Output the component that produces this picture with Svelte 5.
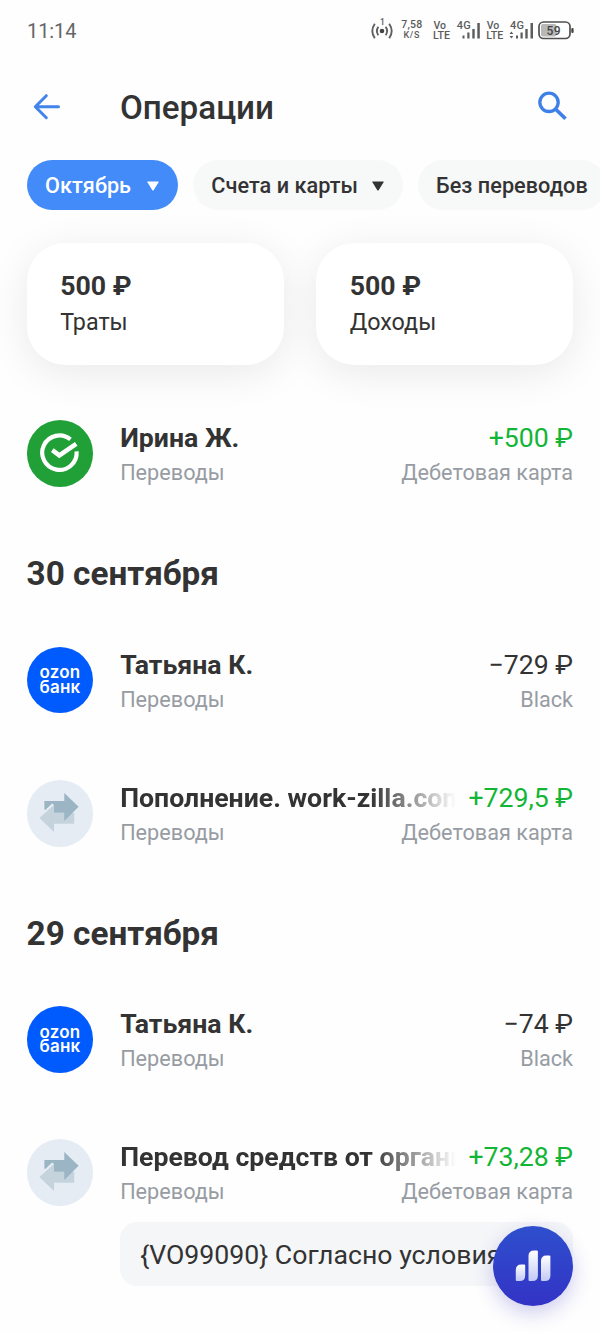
<script>
  const chips = [
    { label: 'Октябрь', arrow: true, active: true },
    { label: 'Счета и карты', arrow: true },
    { label: 'Без переводов' }
  ];
  const totals = [
    { sum: '500 ₽', label: 'Траты' },
    { sum: '500 ₽', label: 'Доходы' }
  ];
  const groups = [
    { rows: [{ icon: 'sber', name: 'Ирина Ж.', sum: '+500 ₽', income: true, account: 'Дебетовая карта' }] },
    {
      date: '30 сентября',
      rows: [
        { icon: 'ozon', name: 'Татьяна К.', sum: '−729 ₽', account: 'Black' },
        { icon: 'transfer', name: 'Пополнение. work-zilla.com', long: true, sum: '+729,5 ₽', income: true, account: 'Дебетовая карта' }
      ]
    },
    {
      date: '29 сентября',
      rows: [
        { icon: 'ozon', name: 'Татьяна К.', sum: '−74 ₽', account: 'Black' },
        { icon: 'transfer', name: 'Перевод средств от организации', long: true, sum: '+73,28 ₽', income: true, account: 'Дебетовая карта', note: '{VO99090} Согласно условиям' }
      ]
    }
  ];
</script>

<div class="screen">
  <div class="status">
    <span class="time">11:14</span>
    <svg class="indicators" width="206" height="28" viewBox="369 16 206 28">
      <g fill="none" stroke="#606060" stroke-width="1.9">
        <path d="M378.300 26.700q-2.800 4.300 0 8.600M385.700 26.700q2.800 4.300 0 8.600M374.800 23.700q-5 7.300 0 14.600M389.200 23.700q5 7.300 0 14.600" />
      </g>
      <circle cx="382" cy="31" r="2.300" fill="#444" />
      <g class="tiny">
        <text x="380" y="25" font-size="8.500">1</text>
        <text x="401.300" y="28" font-size="10.500" textLength="21">7,58</text>
        <text x="403.500" y="38.300" font-size="9" textLength="16">K/S</text>
        <text x="433.500" y="28.600" font-size="10.500" textLength="12.500">Vo</text>
        <text x="433" y="38.800" font-size="10.800" textLength="17" lengthAdjust="spacingAndGlyphs">LTE</text>
        <text x="456.800" y="29.300" font-size="11" textLength="14">4G</text>
        <text x="486.800" y="28.600" font-size="10.500" textLength="12.500">Vo</text>
        <text x="486.300" y="38.800" font-size="10.800" textLength="17" lengthAdjust="spacingAndGlyphs">LTE</text>
        <text x="510" y="29.300" font-size="11" textLength="14">4G</text>
      </g>
      <path fill="#5c5c5c" d="M462.500 35.500h2v3h-2zM467.300 32.500h2.200v6h-2.200zM472.300 29h2.400v9.500h-2.400zM477.300 23h2.500v15.500h-2.500zM516 35.500h2v3h-2zM520.500 32.500h2.200v6h-2.200zM525.300 29h2.400v9.500h-2.400zM530.500 23h2.500v15.500h-2.500zM509.500 34l1.900-2.500 1.900 2.500zM509.500 36l1.900 2.500 1.900-2.500z" />
      <rect x="541" y="24" width="15.500" height="12.500" rx="2" fill="#b8b8b8" />
      <rect x="539" y="22" width="31" height="16.500" rx="4.500" fill="none" stroke="#505050" stroke-width="1.700" />
      <rect x="571.300" y="28" width="2.300" height="5" rx="1" fill="#444" />
      <text class="charge" x="546.500" y="34.500" font-size="12" textLength="14">59</text>
    </svg>
  </div>

  <header>
    <svg class="back" width="28" height="28" viewBox="0 0 28 28" fill="none" stroke="#4284ec" stroke-width="3" stroke-linecap="round" stroke-linejoin="round">
      <path d="M25.500 13.700H2.500M13.300 2.700L2.300 13.700l11 11" />
    </svg>
    <h1>Операции</h1>
    <svg class="search" width="32" height="32" viewBox="0 0 32 32" fill="none" stroke="#3f7fe8">
      <circle cx="12" cy="11.300" r="9.200" stroke-width="3.300" />
      <path d="M19 18.500l9.500 9.300" stroke-width="3.700" />
    </svg>
  </header>

  <div class="chips">
    {#each chips as chip}
      <button class="chip" class:active={chip.active}>
        <span>{chip.label}</span>
        {#if chip.arrow}
          <svg width="12" height="10" viewBox="0 0 12 10"><path d="M.8.500h10.400q.8 0 .4.700L6.800 9.100q-.8 1-1.600 0L.4 1.200Q0 .5.800.500z" fill="currentColor" /></svg>
        {/if}
      </button>
    {/each}
  </div>

  <div class="totals">
    {#each totals as t}
      <div class="total"><b>{t.sum}</b><span>{t.label}</span></div>
    {/each}
  </div>

  <main>
    {#each groups as g}
      {#if g.date}<h2>{g.date}</h2>{/if}
      {#each g.rows as r}
        <section class="row">
          <div class="avatar {r.icon}">
            {#if r.icon === 'sber'}
              <svg width="67" height="67" viewBox="0 0 67 67" fill="none" stroke="#fff">
                <path d="M44.500 19.500A17.300 17.300 0 1 0 50.700 31.500" stroke-width="4.200" />
                <path d="M26.300 30.300l7 5.200L50.300 24" stroke-width="4.600" />
              </svg>
            {:else if r.icon === 'ozon'}
              <span>ozon</span><span>банк</span>
            {:else}
              <svg width="67" height="67" viewBox="0 0 67 67">
                <path d="M13.300 38.300L28 25v8h20.300v11H28v8.300z" fill="#c5d3dd" />
                <path d="M18.300 21h20v-8L52.700 27 38.300 41.300V33H28v-8l-2-1.500-6.500 6.500h-1.200z" fill="#9bb5c4" />
              </svg>
            {/if}
          </div>
          <div class="body">
            <div class="line">
              <span class="name" class:long={r.long}>{r.name}</span>
              <span class="sum" class:income={r.income}>{r.sum}</span>
            </div>
            <div class="line sub"><span>Переводы</span><span>{r.account}</span></div>
            {#if r.note}<div class="note">{r.note}</div>{/if}
          </div>
        </section>
      {/each}
    {/each}
  </main>

  <button class="fab" aria-label="Статистика">
    <svg width="36" height="32" viewBox="0 0 36 32">
      <defs><linearGradient id="bar" x1="0" y1="0" x2="0" y2="1"><stop offset="0" stop-color="#fff" /><stop offset="1" stop-color="#c3c9f4" /></linearGradient></defs>
      <path fill="url(#bar)" d="M.8 20q0-5.500 5.500-5.500h2.900q1 0 1 1V25.500q0 5.500-5.500 5.500H1.800q-1 0-1-1z" />
      <path fill="url(#bar)" d="M13.500 6q0-5.500 5.500-5.500h2.900q1 0 1 1V25.500q0 5.500-5.500 5.500H14.500q-1 0-1-1z" />
      <path fill="url(#bar)" d="M26 11q0-5.500 5.500-5.500h2.900q1 0 1 1V25.500q0 5.500-5.500 5.500H27q-1 0-1-1z" />
    </svg>
  </button>
</div>

<style>
  :global(body) { margin: 0; background: #fefefe; }
  .screen { position: relative; width: 600px; height: 1332px; overflow: hidden; background: #fefefe; color: #333; font-family: Roboto, sans-serif; }
  .status { display: flex; align-items: center; justify-content: space-between; height: 60px; padding: 0 25px 0 27px; box-sizing: border-box; }
  .time { font-size: 20px; letter-spacing: -.1px; color: #666; line-height: 24px; margin-top: 2px; }
  .tiny { fill: #5c5c5c; font-weight: 500; }
  .charge { fill: #444; font-weight: 500; }
  header { display: flex; align-items: center; height: 94px; padding: 0 31px 0 33px; }
  .back { margin-right: 59px; }
  h1 { flex: 1; margin: 2px 0 0; font-size: 33.2px; line-height: 40px; font-weight: 500; }
  .chips { display: flex; gap: 15px; padding: 6px 0 0 26.600px; }
  .chip { display: flex; align-items: center; gap: 15px; flex: none; height: 50px; padding: 2px 18.500px 0; box-sizing: border-box; border: 0; border-radius: 25px; background: #f7f8f8; color: #333; font: 500 21.67px/26px Roboto, sans-serif; letter-spacing: .04px; }
  .chip.active { gap: 16.200px; background: #428bf9; color: #fff; }
  .chip:nth-child(2) { gap: 14px; }
  .totals { display: flex; gap: 32.400px; padding: 33px 26.700px 22px; }
  .total { display: flex; flex-direction: column; flex: 1; height: 122px; box-sizing: border-box; padding: 27px 33.500px; border-radius: 38px; background: #fff; box-shadow: 0 8px 42px rgba(0, 0, 0, .085); }
  .total b { font-size: 26.67px; line-height: 32px; font-weight: 700; }
  .total span { font-size: 23.3px; line-height: 28px; margin-top: 6px; }
  h2 { box-sizing: border-box; height: 93px; margin: 0; padding: 34px 26.600px 0; font-size: 33.3px; line-height: 40px; font-weight: 700; }
  .row { display: flex; align-items: flex-start; padding: 33.3px 27px 33.3px 26.600px; }
  .avatar { display: flex; flex-direction: column; align-items: center; justify-content: center; flex: none; width: 66.700px; height: 66.700px; border-radius: 50%; margin-right: 26.900px; }
  .sber { background: #21a038; }
  .ozon { box-sizing: border-box; background: #005bff; color: #fff; font: 600 17px/14.500px Inter, sans-serif; letter-spacing: .2px; }
  .transfer { background: #e5ecf4; }
  .body { flex: 1; min-width: 0; }
  .line { display: flex; justify-content: space-between; gap: 12px; height: 36px; line-height: 36px; font-size: 26.67px; white-space: nowrap; }
  .name { font-weight: 700; overflow: hidden; }
  .long { -webkit-mask-image: linear-gradient(90deg, #000 calc(100% - 85px), transparent); mask-image: linear-gradient(90deg, #000 calc(100% - 85px), transparent); }
  .income { color: #12b535; }
  .sub { height: 30.700px; line-height: 34.500px; font-size: 21.67px; color: #979ca3; }
  .note { height: 64px; margin-top: 15.500px; padding: 0 20px; box-sizing: border-box; border-radius: 17px; background: #f5f6f8; line-height: 66px; font-size: 26.67px; white-space: nowrap; overflow: hidden; }
  .fab { position: absolute; right: 26.700px; bottom: 26px; display: flex; align-items: center; justify-content: center; width: 80px; height: 80px; padding: 0; border: 0; border-radius: 50%; background: linear-gradient(#2e4fcd, #3333c5); box-shadow: 0 7px 20px rgba(50, 40, 190, .24); }
</style>
